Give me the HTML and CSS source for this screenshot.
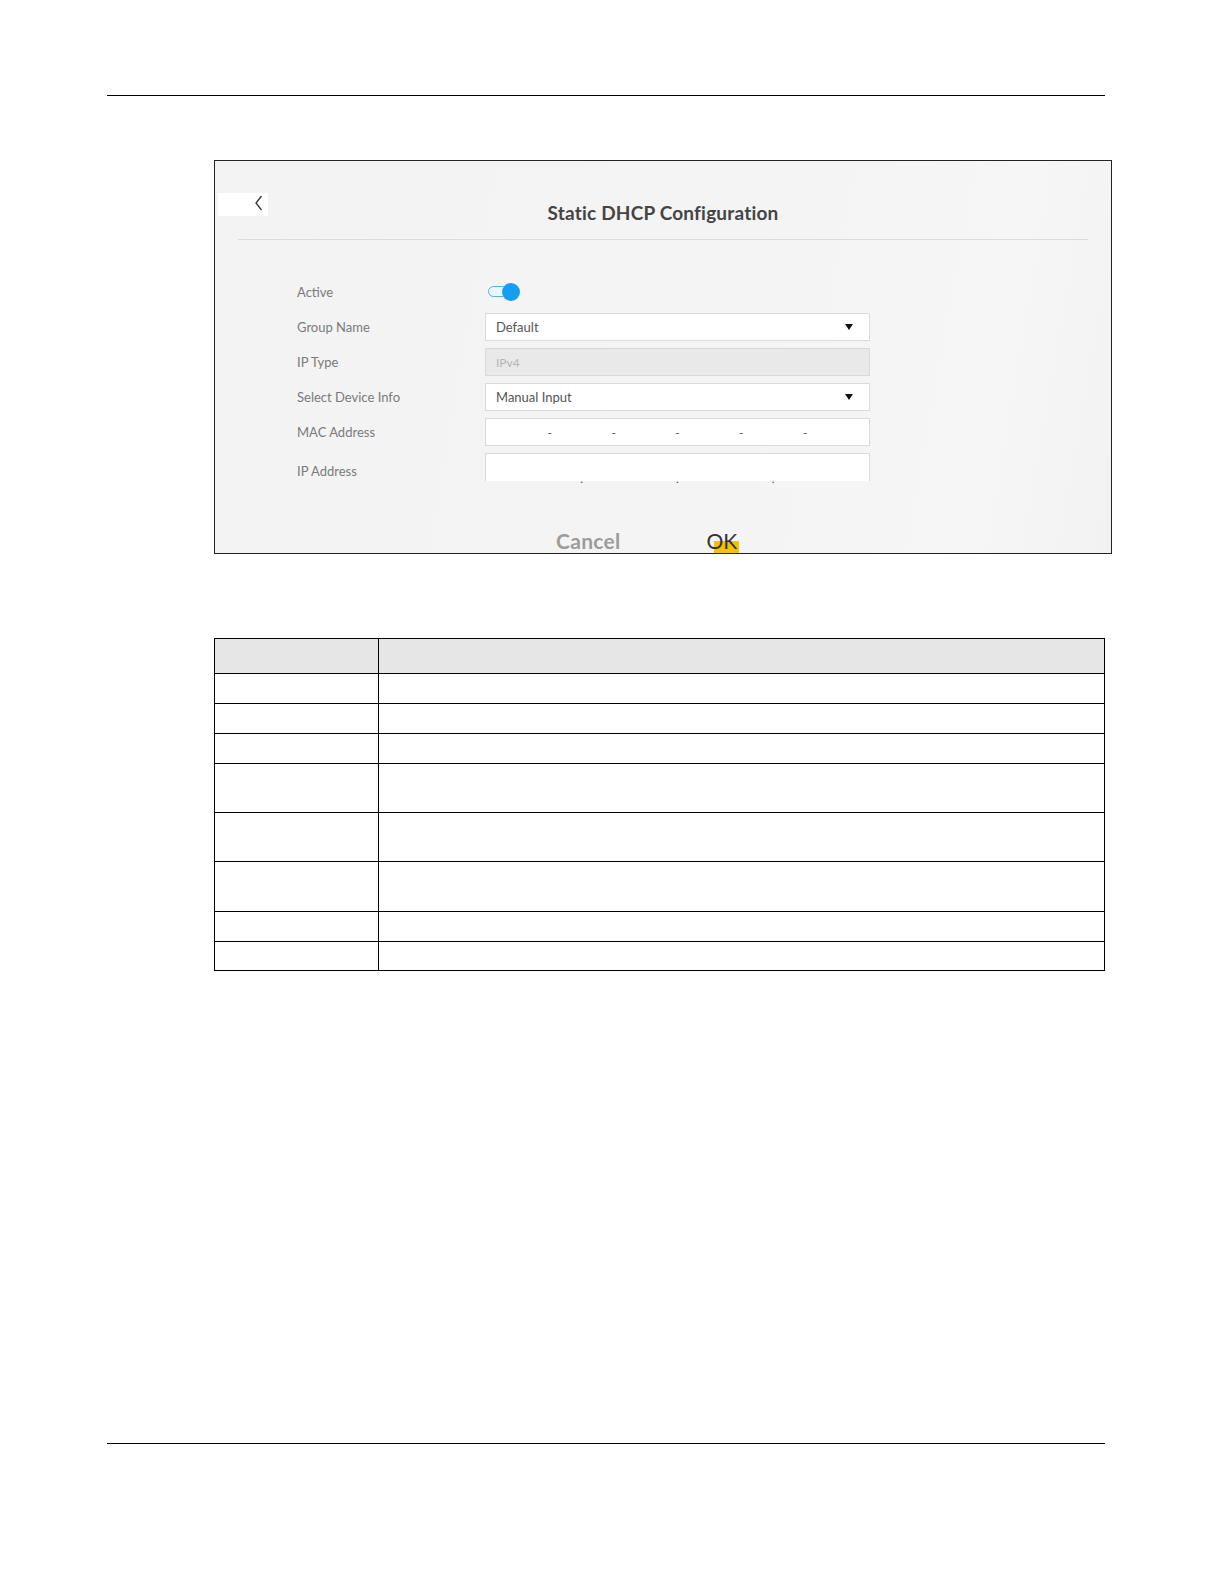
FILE: index.html
```html
<!DOCTYPE html>
<html>
<head>
<meta charset="utf-8">
<link rel="stylesheet" href="styles.css">
</head>
<body>
<div class="page">
  <div class="rule top-rule"></div>

  <div class="shot">
    <div class="shot-head">
      <div class="back">
        <svg width="10" height="16" viewBox="0 0 10 16"><polyline points="7.5,1 2,8 7.5,15" fill="none" stroke="#333" stroke-width="1.3"/></svg>
      </div>
      <div class="title">Static DHCP Configuration</div>
      <div></div>
    </div>
    <div class="sep"></div>

    <div class="form">
      <div class="row">
        <div class="label">Active</div>
        <div class="ctl">
          <div class="toggle"><div class="track"></div><div class="knob"></div></div>
        </div>
      </div>
      <div class="row">
        <div class="label">Group Name</div>
        <div class="field select">Default<span class="caret"></span></div>
      </div>
      <div class="row">
        <div class="label">IP Type</div>
        <div class="field disabled">IPv4</div>
      </div>
      <div class="row">
        <div class="label">Select Device Info</div>
        <div class="field select">Manual Input<span class="caret"></span></div>
      </div>
      <div class="row">
        <div class="label">MAC Address</div>
        <div class="field split mac">
          <span class="seg"></span><span class="dash">-</span>
          <span class="seg"></span><span class="dash">-</span>
          <span class="seg"></span><span class="dash">-</span>
          <span class="seg"></span><span class="dash">-</span>
          <span class="seg"></span><span class="dash">-</span>
          <span class="seg"></span>
        </div>
      </div>
      <div class="row ip-row">
        <div class="label">IP Address</div>
        <div class="field split ip">
          <span class="seg"></span><span class="dot">.</span>
          <span class="seg"></span><span class="dot">.</span>
          <span class="seg"></span><span class="dot">.</span>
          <span class="seg"></span>
        </div>
      </div>
    </div>

    <div class="buttons">
      <span class="btn cancel">Cancel</span>
      <span class="btn ok"><span class="hl"></span><span class="ok-text">OK</span></span>
    </div>
  </div>

  <table class="desc">
    <tr class="head"><td class="c1"></td><td></td></tr>
    <tr class="r30"><td class="c1"></td><td></td></tr>
    <tr class="r30"><td class="c1"></td><td></td></tr>
    <tr class="r30"><td class="c1"></td><td></td></tr>
    <tr class="r49"><td class="c1"></td><td></td></tr>
    <tr class="r49"><td class="c1"></td><td></td></tr>
    <tr class="r50"><td class="c1"></td><td></td></tr>
    <tr class="r30"><td class="c1"></td><td></td></tr>
    <tr class="r29"><td class="c1"></td><td></td></tr>
  </table>

  <div class="rule bottom-rule"></div>
</div>
</body>
</html>
```

FILE: styles.css
```css
html, body {
  margin: 0;
  padding: 0;
  background: #fff;
}
body {
  font-family: "Lato", "Liberation Sans", sans-serif;
}
.page {
  padding-top: 1px;
  margin-top: -1px;
}
.rule {
  margin-left: 107px;
  width: 998px;
  height: 0;
  border-top: 1px solid #000;
}
.top-rule {
  margin-top: 95px;
}
.bottom-rule {
  margin-top: 472px;
}

/* screenshot frame */
.shot {
  margin-top: 64px;
  margin-left: 214px;
  width: 898px;
  height: 394px;
  box-sizing: border-box;
  border: 1px solid #222;
  background: linear-gradient(100deg, #f3f3f3 0%, #f4f4f4 60%, #f6f6f6 85%, #f2f2f2 100%);
  overflow: hidden;
}
.shot-head {
  display: grid;
  grid-template-columns: 1fr auto 1fr;
  align-items: start;
  padding-top: 32px;
}
.back {
  margin-left: 3px;
  width: 50px;
  height: 23px;
  background: #fff;
  display: flex;
  align-items: center;
  justify-content: flex-end;
  padding-right: 4px;
  box-sizing: border-box;
}
.back svg {
  display: block;
  margin-top: -4px;
}
.title {
  margin-top: 8px;
  height: 24px;
  line-height: 24px;
  font-size: 19px;
  font-weight: 700;
  color: #444;
  letter-spacing: 0.2px;
}
.sep {
  margin: 14px 23px 0 23px;
  height: 1px;
  background: #dcdcdc;
}

.form {
  margin-top: 38px;
  display: flex;
  flex-direction: column;
  gap: 7px;
}
.row {
  display: flex;
  align-items: center;
  height: 28px;
}
.label {
  width: 188px;
  margin-left: 82px;
  font-size: 13px;
  color: #7a7a7a;
}
.ip-row .label {
  padding-top: 8px;
}
.ctl {
  display: flex;
  align-items: center;
}
.toggle {
  position: relative;
  width: 33px;
  height: 18px;
  margin-left: 3px;
}
.track {
  position: absolute;
  left: 0;
  top: 3px;
  width: 20px;
  height: 11px;
  box-sizing: border-box;
  border: 1.5px solid #4fb0ee;
  border-radius: 6px;
  background: #eaf5fd;
}
.knob {
  position: absolute;
  left: 14px;
  top: 0;
  width: 18px;
  height: 18px;
  border-radius: 50%;
  background: #169ff0;
}
.field {
  width: 385px;
  height: 28px;
  box-sizing: border-box;
  border: 1px solid #dadada;
  background: #fff;
  font-size: 13px;
  color: #555;
  display: flex;
  align-items: center;
  padding-left: 10px;
}
.field.select {
  justify-content: space-between;
  padding-right: 16px;
}
.caret {
  width: 0;
  height: 0;
  border-left: 4px solid transparent;
  border-right: 4px solid transparent;
  border-top: 6px solid #111;
}
.field.disabled {
  background: #e9e9e9;
  color: #b5b5b5;
  font-size: 12px;
}
.field.split {
  padding-left: 0;
}
.seg {
  flex: 1;
}
.dash, .dot {
  width: 0;
  display: flex;
  justify-content: center;
  color: #555;
  font-size: 12px;
}
.field.ip {
  border-bottom: none;
  align-items: flex-end;
}
.dot {
  line-height: 8px;
  height: 6px;
  overflow: visible;
}

.buttons {
  margin-top: 48px;
  margin-left: 341px;
  display: flex;
  align-items: center;
  gap: 86px;
  height: 24px;
}
.btn {
  font-size: 21px;
  font-weight: 700;
  line-height: 24px;
}
.cancel {
  color: #9c9c9c;
  letter-spacing: 0.3px;
}
.ok {
  position: relative;
  color: #333;
  font-weight: 400;
  font-size: 21px;
}
.ok-text {
  position: relative;
}
.hl {
  position: absolute;
  left: 7px;
  top: 12px;
  width: 25px;
  height: 20px;
  background: #f5c200;
}

/* table */
.desc {
  margin-top: 84px;
  margin-left: 214px;
  width: 891px;
  border-collapse: collapse;
  table-layout: fixed;
}
.desc td {
  border: 1px solid #000;
  padding: 0;
}
.desc .c1 {
  width: 163px;
}
.desc .head td {
  background: #e6e6e6;
  height: 34px;
}
.desc .r30 td { height: 29px; }
.desc .r29 td { height: 28px; }
.desc .r49 td { height: 48px; }
.desc .r50 td { height: 49px; }
```
